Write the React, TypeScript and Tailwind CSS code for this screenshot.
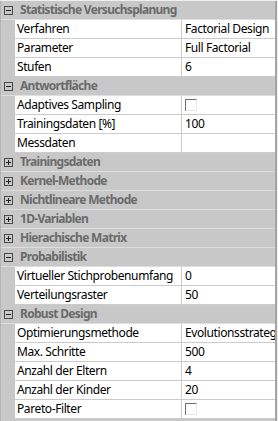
import React from "react"

type Row =
  | { kind: "group"; label: string; open: boolean }
  | { kind: "prop"; label: string; value?: string; check?: boolean }

const rows: Row[] = [
  { kind: "group", label: "Statistische Versuchsplanung", open: true },
  { kind: "prop", label: "Verfahren", value: "Factorial Design" },
  { kind: "prop", label: "Parameter", value: "Full Factorial" },
  { kind: "prop", label: "Stufen", value: "6" },
  { kind: "group", label: "Antwortfläche", open: true },
  { kind: "prop", label: "Adaptives Sampling", check: true },
  { kind: "prop", label: "Trainingsdaten [%]", value: "100" },
  { kind: "prop", label: "Messdaten", value: "" },
  { kind: "group", label: "Trainingsdaten", open: false },
  { kind: "group", label: "Kernel-Methode", open: false },
  { kind: "group", label: "Nichtlineare Methode", open: false },
  { kind: "group", label: "1D-Variablen", open: false },
  { kind: "group", label: "Hierachische Matrix", open: false },
  { kind: "group", label: "Probabilistik", open: true },
  { kind: "prop", label: "Virtueller Stichprobenumfang", value: "0" },
  { kind: "prop", label: "Verteilungsraster", value: "50" },
  { kind: "group", label: "Robust Design", open: true },
  { kind: "prop", label: "Optimierungsmethode", value: "Evolutionsstrategie" },
  { kind: "prop", label: "Max. Schritte", value: "500" },
  { kind: "prop", label: "Anzahl der Eltern", value: "4" },
  { kind: "prop", label: "Anzahl der Kinder", value: "20" },
  { kind: "prop", label: "Pareto-Filter", check: true },
]

function ToggleBox({ open }: { open: boolean }) {
  return (
    <svg width="9" height="9" viewBox="0 0 9 9" className="block">
      <rect x="0.5" y="0.5" width="8" height="8" fill="none" stroke="#4a4a4a" />
      <line x1="2" y1="4.5" x2="7" y2="4.5" stroke="#222" />
      {!open && <line x1="4.5" y1="2" x2="4.5" y2="7" stroke="#222" />}
    </svg>
  )
}

function CheckBox() {
  return (
    <div className="w-[12px] h-[12px] border border-t-[#6f6f6f] border-l-[#6f6f6f] border-b-[#e6e6e6] border-r-[#e6e6e6] bg-white" />
  )
}

export default function App() {
  return (
    <div
      className="w-[278px] h-[421px] bg-[#f0f0f0] pt-px pr-px overflow-hidden text-[12px] leading-[18px]"
      style={{ fontFamily: '"Noto Sans", "Liberation Sans", sans-serif' }}
    >
      <div className="h-full bg-[#c8c8c8] border-r-2 border-[#a3a3a3] border-l border-l-[#b4b4b4] overflow-hidden">
        {rows.map((row, i) =>
          row.kind === "group" ? (
            <div key={i} className="flex items-center h-[19px] border-b border-[#dedede]">
              <div className="w-[14px] pl-[3px] pt-[1px] shrink-0">
                <ToggleBox open={row.open} />
              </div>
              <span className="pl-[5px] font-bold tracking-[-0.7px] text-[#6b6b6b] whitespace-nowrap">{row.label}</span>
            </div>
          ) : (
            <div key={i} className="flex h-[19px] tracking-[-0.4px]">
              <div className="w-[14px] shrink-0" />
              <div className="w-[167px] shrink-0 bg-white border-b border-r border-[#cbcbcb] pl-[2px] text-black whitespace-nowrap overflow-hidden">
                {row.label}
              </div>
              <div className="flex-1 min-w-0 bg-white border-b border-[#cbcbcb] pl-[3px] text-black whitespace-nowrap overflow-hidden flex items-center">
                {row.check ? <CheckBox /> : row.value}
              </div>
            </div>
          )
        )}
      </div>
    </div>
  )
}
